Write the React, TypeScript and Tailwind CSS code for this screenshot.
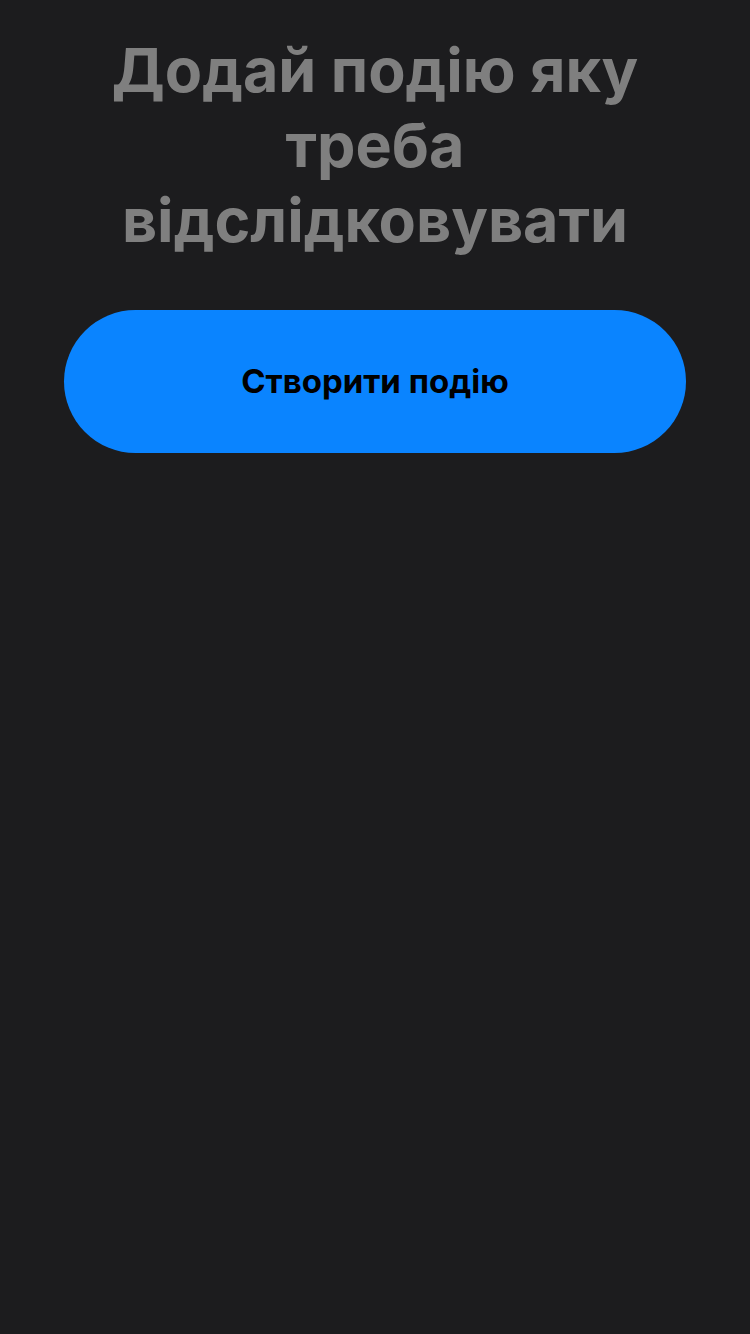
export default function App() {
  return (
    <div className="min-h-[1334px] w-full bg-[#1c1c1e] flex flex-col items-center pt-[33px]">
      <h1 className="w-[580px] text-center font-['Inter',sans-serif] font-bold text-[61px] leading-[75px] text-[#7f7f7f]">
        Додай подію яку треба відслідковувати
      </h1>
      <button className="mt-[52px] w-[622px] h-[143px] rounded-full bg-[#0a84ff] flex items-center justify-center font-['Inter',sans-serif] font-bold text-[33px] text-black">
        Створити подію
      </button>
    </div>
  );
}
